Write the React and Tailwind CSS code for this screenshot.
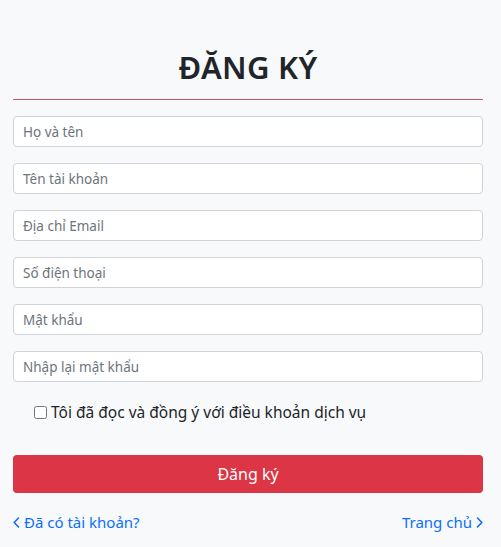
const fields = [
  { type: "text", placeholder: "Họ và tên" },
  { type: "text", placeholder: "Tên tài khoản" },
  { type: "email", placeholder: "Địa chỉ Email" },
  { type: "tel", placeholder: "Số điện thoại" },
  { type: "password", placeholder: "Mật khẩu" },
  { type: "password", placeholder: "Nhập lại mật khẩu" },
];

const Chevron = ({ dir }) => (
  <svg width="7" height="11" viewBox="0 0 7 11" fill="none" stroke="currentColor" strokeWidth="1.6" strokeLinecap="round" strokeLinejoin="round">
    {dir === "left" ? <polyline points="5.5,1 1.2,5.5 5.5,10" /> : <polyline points="1.5,1 5.8,5.5 1.5,10" />}
  </svg>
);

const App = () => {
  return (
    <div className="min-h-[547px] w-full bg-[#f8f9fa] font-['Noto_Sans',sans-serif] text-[#212529]">
      <div className="px-[13px] pt-[45px] w-[496px]">
        <h1 className="text-center text-[31px] font-semibold leading-[44px] tracking-[0.3px]">ĐĂNG KÝ</h1>
        <hr className="mt-[10px] border-0 border-t border-[#c8525e] mb-[16px]" />

        <form className="flex flex-col gap-[16px]" onSubmit={(e) => e.preventDefault()}>
          {fields.map((f) => (
            <input
              key={f.placeholder}
              type={f.type}
              placeholder={f.placeholder}
              className="h-[31px] w-full rounded-[4px] border border-[#ced4da] bg-white px-[9px] text-[13.5px] placeholder:text-[#6c757d] outline-none"
            />
          ))}

          <label className="mt-[3px] flex items-center gap-[4px] pl-[21px] text-[15.5px]">
            <input type="checkbox" className="h-[13px] w-[13px]" />
            <span>Tôi đã đọc và đồng ý với điều khoản dịch vụ</span>
          </label>

          <button
            type="submit"
            className="mt-[15px] h-[38px] w-full rounded-[4px] bg-[#dc3545] text-[16px] text-white"
          >
            Đăng ký
          </button>
        </form>

        <div className="mt-[18px] flex items-center justify-between text-[15px] text-[#0d6efd]">
          <a href="#" className="flex items-center gap-[4px]">
            <Chevron dir="left" />
            Đã có tài khoản?
          </a>
          <a href="#" className="flex items-center gap-[4px]">
            Trang chủ
            <Chevron dir="right" />
          </a>
        </div>
      </div>
    </div>
  );
};

export default App;
